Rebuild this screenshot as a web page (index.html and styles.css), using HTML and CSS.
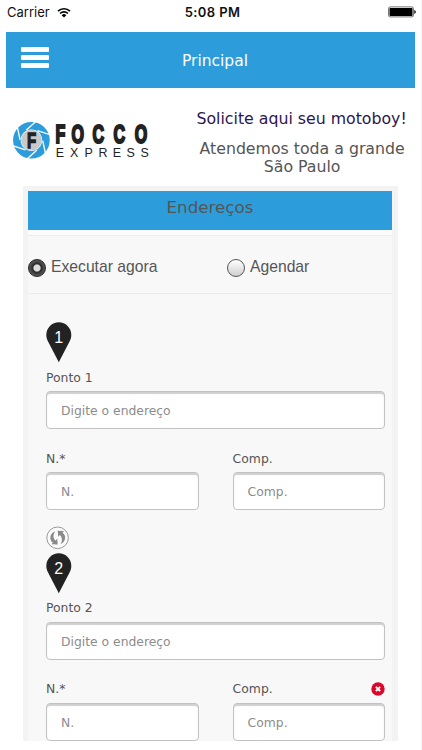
FILE: index.html
```html
<!DOCTYPE html>
<html lang="pt-BR">
<head>
    <meta charset="UTF-8">
    <meta name="viewport" content="width=device-width, initial-scale=1.0">
    <title>Focco Express</title>
    <link rel="stylesheet" href="styles.css">
</head>
<body>

<div class="status-bar">
    <div class="carrier">
        Carrier
        <svg class="wifi" width="14" height="11" viewBox="0 0 14 11">
            <path d="M1 4.2a8.6 8.6 0 0 1 12 0M3.1 6.5a5.6 5.6 0 0 1 7.8 0" fill="none" stroke="#000" stroke-width="1.7"/>
            <path d="M4.7 8.2a3.3 3.3 0 0 1 4.6 0L7 10.6z"/>
        </svg>
    </div>
    <div class="clock">5:08 PM</div>
    <svg class="battery" width="29" height="12" viewBox="0 0 29 12">
        <rect x="1.5" y="0.9" width="25" height="10" rx="1.6" fill="#fff" stroke="#666" stroke-width="0.9"/>
        <rect x="2.5" y="1.9" width="23" height="8" rx="0.6"/>
        <path d="M27.3 4q1.5.5 1.5 1.9t-1.5 1.9z"/>
    </svg>
</div>

<div class="header">
    <button class="menu-button" aria-label="Menu"><span></span><span></span><span></span></button>
    <h1>Principal</h1>
</div>

<div class="intro">
    <svg class="logo" width="140" height="42" viewBox="0 0 140 42">
        <circle cx="18.5" cy="20.2" r="14.6" fill="none" stroke="#2d9cdb" stroke-width="7.6"/>
        <g stroke="#fff" stroke-width="1.3">
            <path id="blade" d="M13.2 10.1L23.2 1.1"/>
            <use href="#blade" transform="rotate(60 18.5 20.2)"/>
            <use href="#blade" transform="rotate(120 18.5 20.2)"/>
            <use href="#blade" transform="rotate(180 18.5 20.2)"/>
            <use href="#blade" transform="rotate(240 18.5 20.2)"/>
            <use href="#blade" transform="rotate(300 18.5 20.2)"/>
        </g>
        <circle cx="18.5" cy="20.2" r="10.4" fill="#c9c9cb"/>
        <text class="logo-mark" transform="translate(14 28.2) scale(.66 1)" x="0" y="0">F</text>
        <text class="logo-name" transform="translate(42.8 23.5) scale(.62 1)" x="0 26 60 94 128.5" y="0">FOCCO</text>
        <text class="logo-sub" x="43 57.4 71.8 86 100.2 114.2 128.3" y="37.6">EXPRESS</text>
    </svg>
    <div class="intro-text">
        <a href="#">Solicite aqui seu motoboy!</a>
        <p>Atendemos toda a grande São Paulo</p>
    </div>
</div>

<div class="panel">
    <h2>Endereços</h2>
    <div class="schedule">
        <label><span class="radio checked"></span>Executar agora</label>
        <label><span class="radio"></span>Agendar</label>
    </div>

    <div class="point">
        <svg class="pin" width="26" height="41" viewBox="0 0 26 41">
            <path d="M.3 12.8a12.5 12.5 0 0 1 25 0c0 2.3-.5 4.2-1.5 6.2L12.8 40.3 1.8 19C.8 17 .3 15.1.3 12.8z"/>
            <text x="12.7" y="20.5">1</text>
        </svg>
        <div class="label">Ponto 1</div>
        <input type="text" placeholder="Digite o endereço">
        <div class="row">
            <div class="field">
                <div class="label">N.*</div>
                <input type="text" placeholder="N.">
            </div>
            <div class="field">
                <div class="label">Comp.</div>
                <input type="text" placeholder="Comp.">
            </div>
        </div>
    </div>

    <div class="point">
        <svg class="swap" width="24" height="24" viewBox="0 0 24 24">
            <circle cx="11.6" cy="11.8" r="10.8" fill="#fbfbfb" stroke="#999" stroke-width="1"/>
            <path d="M9.2 5.4C3.6 6.9 2.9 14.2 7 16.7l-1.6 1.6 6.3.2-.5-5.8-1.7 1.8C7 12.5 6.8 8.3 9.2 5.4z"/>
            <path d="M14.4 18.2c5.4-1.6 6.3-8.9 2.1-11.4L18 5.1l-6.3-.3.5 6 1.7-1.9c2.4 2 2.8 6.4.5 9.3z"/>
        </svg>
        <svg class="pin" width="26" height="41" viewBox="0 0 26 41">
            <path d="M.3 12.8a12.5 12.5 0 0 1 25 0c0 2.3-.5 4.2-1.5 6.2L12.8 40.3 1.8 19C.8 17 .3 15.1.3 12.8z"/>
            <text x="12.7" y="20.5">2</text>
        </svg>
        <div class="label">Ponto 2</div>
        <input type="text" placeholder="Digite o endereço">
        <div class="row">
            <div class="field">
                <div class="label">N.*</div>
                <input type="text" placeholder="N.">
            </div>
            <div class="field">
                <div class="label">Comp.
                    <svg class="remove" width="14" height="14" viewBox="0 0 14 14">
                        <circle cx="7" cy="7" r="6.7" fill="#d9082b"/>
                        <path d="M4.9 4.9l4.2 4.2M9.1 4.9L4.9 9.1" stroke="#fff" stroke-width="2"/>
                    </svg>
                </div>
                <input type="text" placeholder="Comp.">
            </div>
        </div>
    </div>
</div>

</body>
</html>
```
FILE: styles.css
```css
* {
    box-sizing: border-box;
}
body {
    margin: 0;
    height: 750px;
    overflow: hidden;
    background-color: #fff;
    border-right: 1px solid #f5f5f5;
    font-family: Verdana, "DejaVu Sans", sans-serif;
    color: #555;
}
.status-bar {
    display: grid;
    grid-template-columns: 1fr auto 1fr;
    align-items: center;
    height: 24px;
    padding: 0 5px 0 7px;
    font-family: Inter, sans-serif;
    font-size: 13px;
    color: #111;
}
.carrier {
    display: flex;
    align-items: center;
    gap: 7px;
}
.clock {
    padding-left: 2px;
    font-weight: 600;
    letter-spacing: 0.4px;
}
.battery {
    justify-self: end;
}
.header {
    display: grid;
    grid-template-columns: 1fr auto 1fr;
    align-items: center;
    height: 56px;
    margin: 8px 6px 0;
    padding: 0 15px;
    background-color: #2d9cdb;
}
.header h1 {
    margin: 2px 0 0;
    padding-left: 9px;
    font-size: 15.5px;
    font-weight: normal;
    color: #fff;
}
.menu-button {
    display: flex;
    flex-direction: column;
    gap: 3px;
    width: 28px;
    margin-bottom: 5px;
    padding: 0;
    border: none;
    background: none;
}
.menu-button span {
    height: 5px;
    border-radius: 1px;
    background-color: #fff;
}
.intro {
    display: flex;
    height: 98px;
    padding: 21px 12px 0 13px;
}
.logo {
    margin-top: 11px;
}
.logo-mark {
    font: bold 23px "Liberation Sans", Arial, sans-serif;
    fill: #222;
    stroke: #222;
    stroke-width: 1.4px;
}
.logo-name {
    font: bold 26px "Liberation Sans", Arial, sans-serif;
    fill: #222;
    stroke: #222;
    stroke-width: 2.2px;
}
.logo-sub {
    font: 12.5px "Liberation Sans", Arial, sans-serif;
    fill: #222;
}
.intro-text {
    width: 216px;
    margin-left: 42px;
    font-size: 15.75px;
    line-height: 19px;
    text-align: center;
}
.intro-text a {
    display: block;
    color: #2b1650;
    text-decoration: none;
    white-space: nowrap;
}
.intro-text p {
    margin: 12px 0 0;
    padding-left: 1px;
    line-height: 18px;
}
.panel {
    width: 375px;
    height: 555px;
    margin-left: 23px;
    overflow: hidden;
    border: solid #f3f3f4;
    border-width: 5px 6px 0 5px;
    background-color: #f8f8f8;
}
.panel h2 {
    height: 45px;
    margin: 0;
    border-bottom: 6px solid #fcfcfc;
    background-color: #2d9cdb;
    font-size: 16.7px;
    font-weight: normal;
    line-height: 32px;
    text-align: center;
}
.schedule {
    display: grid;
    grid-template-columns: 199px 1fr;
    align-items: center;
    height: 59px;
    margin-top: -1px;
    padding-top: 4px;
    border-top: 1px solid #ececee;
    border-bottom: 1px solid #ececee;
    font-family: "Liberation Sans", Arial, sans-serif;
    font-size: 15.7px;
}
.schedule label {
    display: flex;
    align-items: center;
    gap: 5px;
    line-height: 18px;
}
.radio {
    width: 18px;
    height: 18px;
    margin-top: 2px;
    border: 1.5px solid #555;
    border-radius: 50%;
    background: linear-gradient(#fff, #d0d0d0);
}
.radio.checked {
    border-color: #222;
    background: radial-gradient(circle, #ddd 3px, #2a2a2a 4.2px, #5c5c5c 8px);
}
.point {
    display: flex;
    flex-direction: column;
    width: 339px;
    margin-left: 18px;
}
.schedule + .point {
    margin-top: 28px;
}
.pin {
    fill: #222;
}
.pin text {
    font: 16px "Liberation Sans", Arial, sans-serif;
    fill: #fff;
    text-anchor: middle;
}
.label {
    display: flex;
    align-items: center;
    justify-content: space-between;
    height: 18px;
    font-size: 12.4px;
}
.pin + .label {
    margin: 5px 0;
}
input {
    width: 100%;
    height: 38px;
    padding: 2px 14px 0;
    border: 1px solid #c2c2c2;
    border-radius: 4px;
    background-color: #fff;
    box-shadow: inset 0 2px 1px #d0d0d0;
    font-family: inherit;
    font-size: 12.35px;
}
input::placeholder {
    color: #8c8c8c;
}
.row {
    display: grid;
    grid-template-columns: 153px 152.4px;
    justify-content: space-between;
    margin-top: 20.3px;
}
.row .label {
    margin-bottom: 5px;
}
.swap {
    margin-top: 16px;
    margin-bottom: 2.3px;
    fill: #8a8a8a;
}
```
